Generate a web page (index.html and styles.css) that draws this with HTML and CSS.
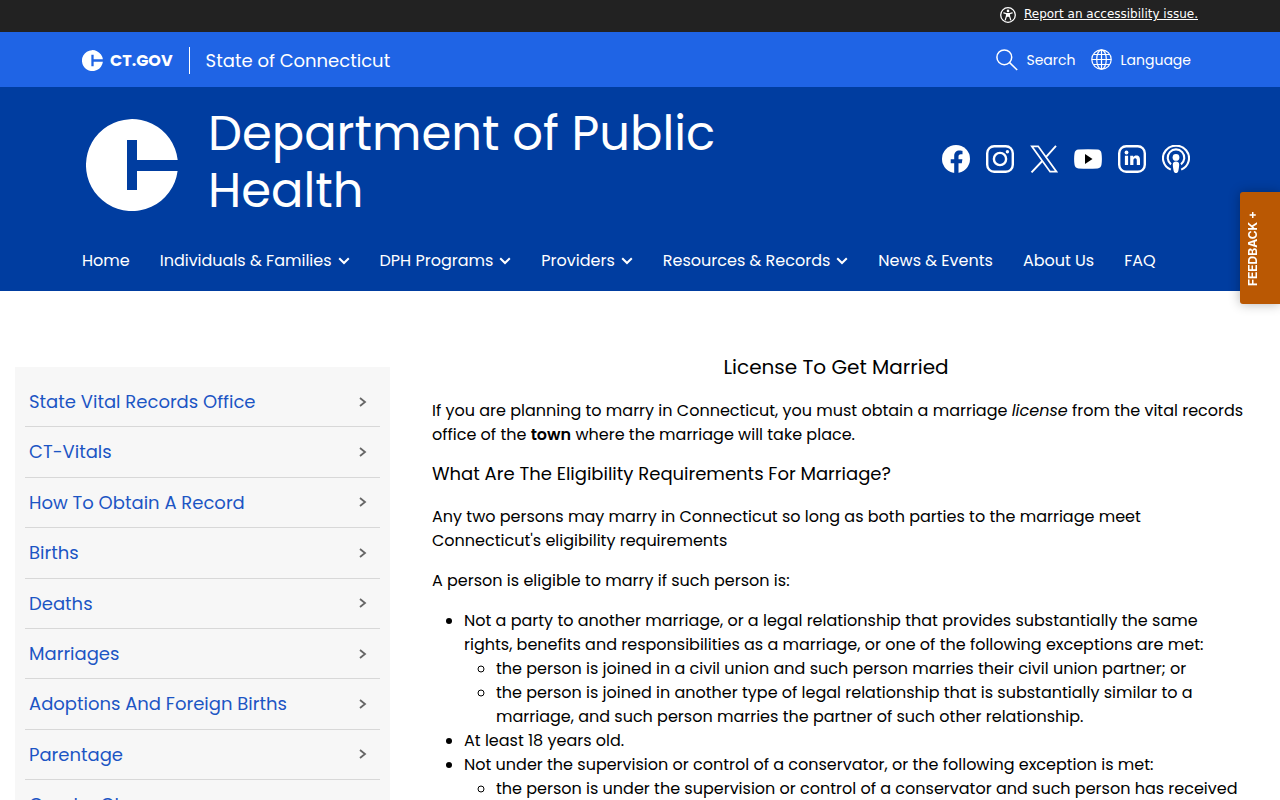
FILE: index.html
```html
<!DOCTYPE html>
<html lang="en">
<head>
<meta charset="utf-8">
<meta name="viewport" content="width=device-width, initial-scale=1">
<title>License To Get Married</title>
<link rel="stylesheet" href="styles.css">
</head>
<body>
<div class="access-bar">
  <div class="container access-inner">
    <a class="access-link" href="#">
      <svg width="16" height="16" viewBox="0 0 16 16" aria-hidden="true"><circle cx="8" cy="8" r="7.3" fill="none" stroke="#fff" stroke-width="1.3"/><circle cx="8" cy="3.9" r="1.3" fill="#fff"/><path d="M3.8 5.9l2.7.8v2.2l-1.2 4M12.200 5.900l-2.700.8v2.200l1.200 4M6.500 6.700h3M6.500 9.400L8 8.600l1.500.8" fill="none" stroke="#fff" stroke-width="1.2" stroke-linecap="round"/><path d="M6.400 6.500h3.200v3H6.400z" fill="#fff"/></svg>
      <span>Report an accessibility issue.</span>
    </a>
  </div>
</div>

<div class="state-bar">
  <div class="container state-inner">
    <a class="gov" href="#">
      <svg width="21" height="21" viewBox="0 0 92 92" aria-hidden="true"><path fill="#fff" d="M91.500 41H51V21H41v50h10V52h40.500A46 46 0 1 1 91.500 41z"/></svg>
      <span>CT.GOV</span>
    </a>
    <span class="state-name">State of Connecticut</span>
    <div class="tools">
      <button class="tool" type="button">
        <svg width="22" height="22" viewBox="0 0 22 22" fill="none" stroke="#fff" stroke-width="1.500" aria-hidden="true"><circle cx="8.300" cy="8.300" r="7.400"/><path d="M13.600 13.600l7.600 7.400"/></svg>
        <span>Search</span>
      </button>
      <button class="tool" type="button">
        <svg width="21" height="21" viewBox="0 0 21 21" fill="none" stroke="#fff" stroke-width="1.200" aria-hidden="true"><circle cx="10.500" cy="10.500" r="9.700"/><ellipse cx="10.500" cy="10.500" rx="4.800" ry="9.700"/><path d="M10.500.8v19.400M.8 10.500h19.400M2.500 5.500h16M2.500 15.500h16"/></svg>
        <span>Language</span>
      </button>
    </div>
  </div>
</div>

<header class="header">
  <div class="container brand">
    <a class="brand-logo" href="#" aria-label="Department home">
      <svg width="92" height="92" viewBox="0 0 92 92" aria-hidden="true"><path fill="#fff" d="M91.700 41H51V21H41v50h10V52h40.600A46 46 0 1 1 91.700 41z"/></svg>
    </a>
    <h1 class="title">Department of Public Health</h1>
    <div class="social">
      <a href="#" aria-label="Facebook"><svg width="28" height="28" viewBox="0 0 28 28"><circle cx="14" cy="14" r="14" fill="#fff"/><path fill="#003da0" d="M12.200 28V18.200H8.700v-4h3.500v-3.100c0-3.500 2.100-5.500 5.300-5.500 1.500 0 3 .3 3 .3v3.400h-1.700c-1.700 0-2.300 1.100-2.300 2.200v2.700h3.900l-.6 4h-3.300V28z"/></svg></a>
      <a href="#" aria-label="Instagram"><svg width="28" height="28" viewBox="0 0 28 28" fill="none" stroke="#fff" stroke-width="2.400"><rect x="1.200" y="1.200" width="25.600" height="25.600" rx="7"/><circle cx="14" cy="14" r="6.100"/><circle cx="21.400" cy="6.700" r="1.700" fill="#fff" stroke="none"/></svg></a>
      <a href="#" aria-label="X"><svg width="28" height="28" viewBox="0 0 28 28" fill="none" stroke="#fff"><path stroke-width="1.700" d="M1.800 1.300h6.400l18.300 25.400h-6.400z"/><path stroke-width="1.900" d="M26 .8L15.700 12.300M12.300 16L1.500 27.400"/></svg></a>
      <a href="#" aria-label="YouTube"><svg width="28" height="28" viewBox="0 0 28 28"><path fill="#fff" d="M4.500 4.600Q14 3.700 23.500 4.600 27.100 4.900 27.500 8.500 28.300 14 27.500 19.500 27.100 23.100 23.500 23.400 14 24.300 4.500 23.400.9 23.100.5 19.500-.3 14 .5 8.500.9 4.900 4.500 4.600z"/><path d="M11 9v10l7.500-5z"/></svg></a>
      <a href="#" aria-label="LinkedIn"><svg width="28" height="28" viewBox="0 0 28 28"><rect x="1.200" y="1.200" width="25.600" height="25.600" rx="7" fill="none" stroke="#fff" stroke-width="2.400"/><circle cx="8.500" cy="7.500" r="1.900" fill="#fff"/><path fill="#fff" d="M6.900 10.700h3.200v9.300H6.900zM12.200 10.700h3v1.400c.6-1 1.700-1.700 3.100-1.700 2.900 0 3.700 2 3.700 4.500V20h-3.200v-4.500c0-1.300-.3-2.300-1.600-2.300-1.400 0-1.800 1-1.800 2.300V20h-3.200z"/></svg></a>
      <a href="#" aria-label="Podcast"><svg width="28" height="28" viewBox="0 0 28 28"><g fill="none" stroke="#fff" stroke-width="2.100"><path d="M8.800 24.600a13 12.500 0 1 1 10.400 0"/><path d="M9 19.300a8.300 8.300 0 1 1 10 0"/></g><circle cx="14" cy="12.400" r="3.400" fill="#fff"/><path fill="#fff" d="M10.800 19.500c0-2.200 1.500-2.900 3.200-2.900s3.200.7 3.200 2.900c0 2-.5 4.800-.9 6.500-.3 1.500-1.200 2-2.300 2s-2-.5-2.300-2c-.4-1.700-.9-4.500-.9-6.500z"/></svg></a>
    </div>
  </div>
  <nav class="container nav" aria-label="Main">
    <a href="#">Home</a>
    <a href="#">Individuals &amp; Families<svg width="12" height="8" viewBox="0 0 12 8"><path d="M1.200 1.200L6 6l4.800-4.800"/></svg></a>
    <a href="#">DPH Programs<svg width="12" height="8" viewBox="0 0 12 8"><path d="M1.200 1.200L6 6l4.800-4.800"/></svg></a>
    <a href="#">Providers<svg width="12" height="8" viewBox="0 0 12 8"><path d="M1.200 1.200L6 6l4.800-4.800"/></svg></a>
    <a href="#">Resources &amp; Records<svg width="12" height="8" viewBox="0 0 12 8"><path d="M1.200 1.200L6 6l4.800-4.800"/></svg></a>
    <a href="#">News &amp; Events</a>
    <a href="#">About Us</a>
    <a href="#">FAQ</a>
  </nav>
</header>

<button class="feedback" type="button">FEEDBACK +</button>

<div class="page">
  <aside class="side">
    <a href="#">State Vital Records Office<svg width="8" height="10" viewBox="0 0 8 10"><path d="M1 1l5 4-5 4"/></svg></a>
    <a href="#">CT-Vitals<svg width="8" height="10" viewBox="0 0 8 10"><path d="M1 1l5 4-5 4"/></svg></a>
    <a href="#">How To Obtain A Record<svg width="8" height="10" viewBox="0 0 8 10"><path d="M1 1l5 4-5 4"/></svg></a>
    <a href="#">Births<svg width="8" height="10" viewBox="0 0 8 10"><path d="M1 1l5 4-5 4"/></svg></a>
    <a href="#">Deaths<svg width="8" height="10" viewBox="0 0 8 10"><path d="M1 1l5 4-5 4"/></svg></a>
    <a href="#">Marriages<svg width="8" height="10" viewBox="0 0 8 10"><path d="M1 1l5 4-5 4"/></svg></a>
    <a href="#">Adoptions And Foreign Births<svg width="8" height="10" viewBox="0 0 8 10"><path d="M1 1l5 4-5 4"/></svg></a>
    <a href="#">Parentage<svg width="8" height="10" viewBox="0 0 8 10"><path d="M1 1l5 4-5 4"/></svg></a>
    <a href="#">Gender Change<svg width="8" height="10" viewBox="0 0 8 10"><path d="M1 1l5 4-5 4"/></svg></a>
  </aside>
  <main class="content">
    <h2>License To Get Married</h2>
    <p>If you are planning to marry in Connecticut, you must obtain a marriage <em>license</em> from the vital records office of the <strong>town</strong> where the marriage will take place.</p>
    <h3>What Are The Eligibility Requirements For Marriage?</h3>
    <p>Any two persons may marry in Connecticut so long as both parties to the marriage meet Connecticut's eligibility requirements</p>
    <p>A person is eligible to marry if such person is:</p>
    <ul>
      <li>Not a party to another marriage, or a legal relationship that provides substantially the same rights, benefits and responsibilities as a marriage, or one of the following exceptions are met:
        <ul>
          <li>the person is joined in a civil union and such person marries their civil union partner; or</li>
          <li>the person is joined in another type of legal relationship that is substantially similar to a marriage, and such person marries the partner of such other relationship.</li>
        </ul>
      </li>
      <li>At least 18 years old.</li>
      <li>Not under the supervision or control of a conservator, or the following exception is met:
        <ul>
          <li>the person is under the supervision or control of a conservator and such person has received</li>
        </ul>
      </li>
    </ul>
  </main>
</div>
</body>
</html>
```
FILE: styles.css
```css
* { box-sizing: border-box; }
body {
  margin: 0;
  background: #fff;
  color: #000;
  font: 16px/24px Poppins, Inter, sans-serif;
}
a { color: inherit; text-decoration: none; }
svg { display: block; flex: none; }
.container {
  max-width: 1140px;
  margin: 0 auto;
  padding: 0 12px;
}
.access-bar { background: #222; color: #fff; }
.access-inner { display: flex; justify-content: flex-end; height: 32px; }
.access-link {
  display: flex;
  gap: 8px;
  padding-top: 7px;
  font: 12px/14px "DejaVu Sans", sans-serif;
}
.access-link span { text-decoration: underline; }
.state-bar { background: #1f64e5; color: #fff; }
.state-inner { display: flex; align-items: center; height: 55px; padding-top: 2px; }
.gov {
  display: flex;
  align-items: center;
  gap: 7px;
  padding-right: 16px;
  border-right: 1px solid #fff;
  font-size: 16px;
  font-weight: 700;
  line-height: 27px;
}
.state-name { margin-left: 16px; font-size: 18px; }
.tools { display: flex; gap: 16px; margin-left: auto; padding: 0 7px 2px 0; }
.tool {
  display: flex;
  align-items: center;
  gap: 8px;
  padding: 0;
  border: 0;
  background: none;
  color: #fff;
  font: 14px/22px Poppins, Inter, sans-serif;
}
.header { background: #003da0; color: #fff; }
.brand { display: flex; align-items: center; padding-top: 18px; }
.brand-logo { padding: 6px 0 0 4px; }
.title {
  flex: 0 1 600px;
  margin: 0 0 0 30px;
  font-size: 48px;
  font-weight: 400;
  line-height: 57px;
}
.social { display: flex; gap: 16px; margin-left: auto; padding: 0 8px 6px 0; }
.nav { display: flex; gap: 30px; padding-top: 29px; padding-bottom: 18px; }
.nav a { display: flex; align-items: center; gap: 6px; white-space: nowrap; line-height: 25px; }
.nav svg { fill: none; stroke: #fff; stroke-width: 2; }
.feedback {
  position: fixed;
  top: 192px;
  right: 0;
  width: 40px;
  height: 112px;
  padding: 0 0 0 13px;
  border: 0;
  border-radius: 0 3px 3px 0;
  background: #ba5803;
  box-shadow: 0 0 12px rgba(0, 0, 0, .3);
  color: #fff;
  font: 700 12px/16px Inter, sans-serif;
  writing-mode: vertical-rl;
  transform: rotate(180deg);
}
.page { display: flex; align-items: flex-start; gap: 42px; padding: 0 32px 0 15px; }
.side {
  flex: 0 0 375px;
  margin-top: 76px;
  padding: 10px;
  background: #f7f7f7;
}
.side a {
  display: flex;
  align-items: center;
  justify-content: space-between;
  padding: 13px 13px 13px 4px;
  border-bottom: 1px solid #d8d8d8;
  color: #1c55c4;
  font-size: 18px;
  line-height: 1.3;
}
.side svg { fill: none; stroke: #666; stroke-width: 1.8; }
.content { flex: 1; padding-top: 64px; }
.content h2 {
  margin: 0 0 20px;
  padding-right: 8px;
  font-size: 20px;
  font-weight: 400;
  line-height: 24px;
  text-align: center;
}
.content h3 { margin: 0 0 20px; font-size: 18px; font-weight: 400; line-height: 22px; }
.content p { margin: 0 0 16px; }
.content strong { font-weight: 600; }
.content ul { margin: 0; padding-left: 32px; }
```
